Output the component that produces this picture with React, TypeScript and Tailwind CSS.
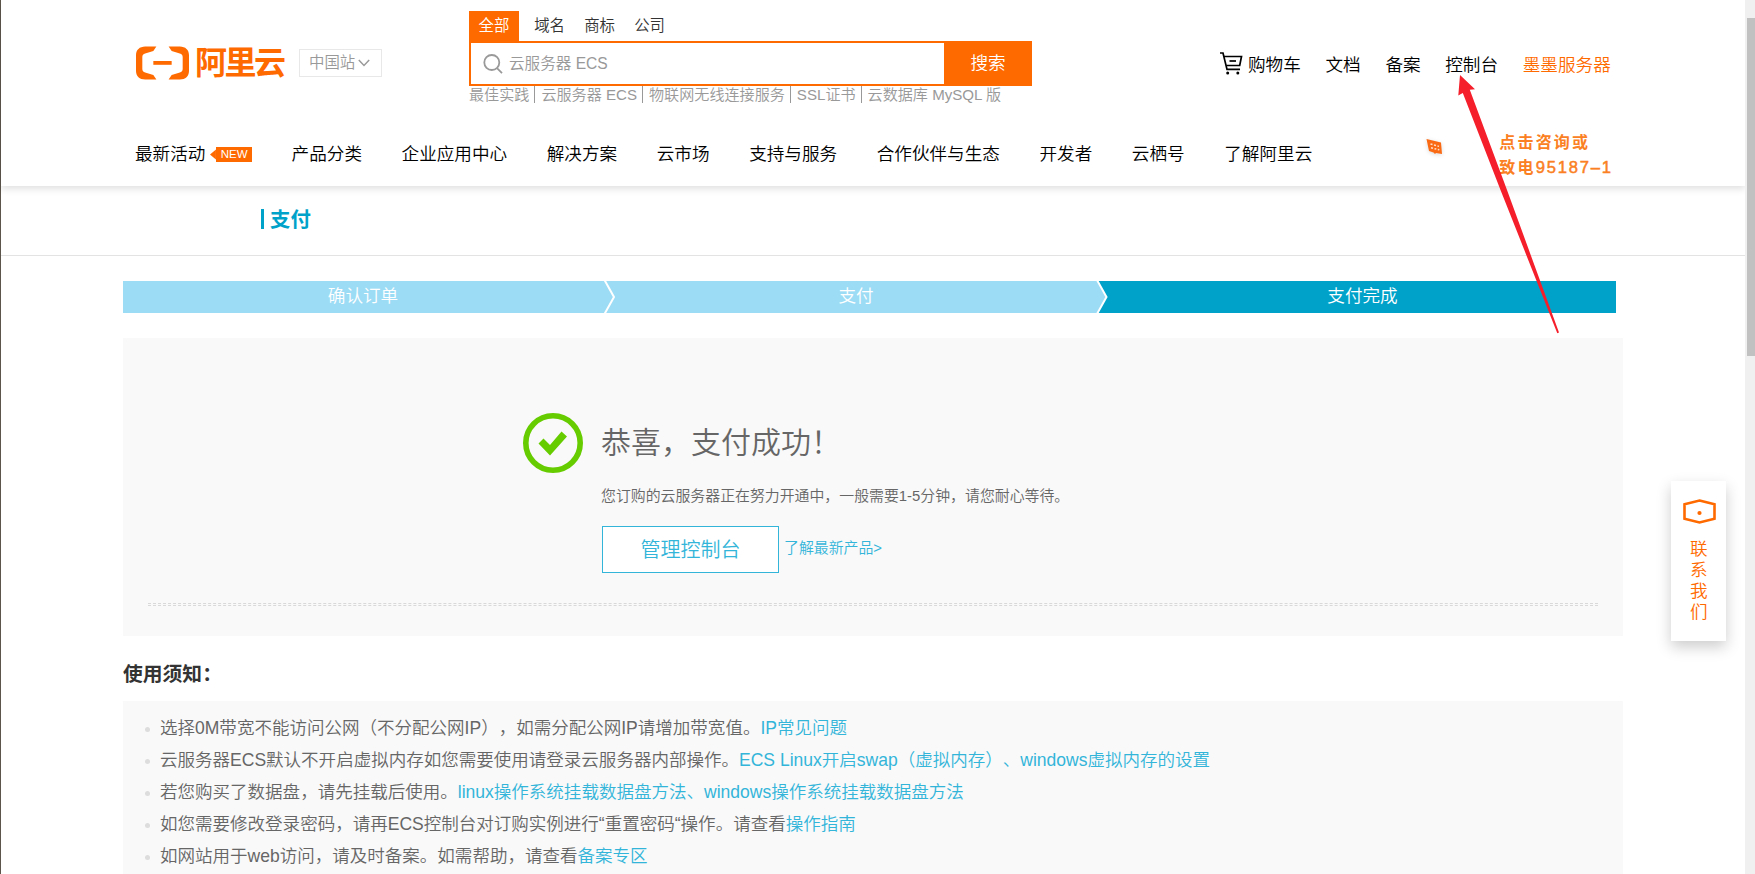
import { clsx } from "clsx";

interface Notice {
  text: string;
  links: string[];
}

const searchTabs = ["全部", "域名", "商标", "公司"];
const hotWords = ["最佳实践", "云服务器 ECS", "物联网无线连接服务", "SSL证书", "云数据库 MySQL 版"];
const navItems = [
  "产品分类",
  "企业应用中心",
  "解决方案",
  "云市场",
  "支持与服务",
  "合作伙伴与生态",
  "开发者",
  "云栖号",
  "了解阿里云",
];

const notices: Notice[] = [
  { text: "选择0M带宽不能访问公网（不分配公网IP），如需分配公网IP请增加带宽值。", links: ["IP常见问题"] },
  {
    text: "云服务器ECS默认不开启虚拟内存如您需要使用请登录云服务器内部操作。",
    links: ["ECS Linux开启swap（虚拟内存）", "windows虚拟内存的设置"],
  },
  {
    text: "若您购买了数据盘，请先挂载后使用。",
    links: ["linux操作系统挂载数据盘方法", "windows操作系统挂载数据盘方法"],
  },
  { text: "如您需要修改登录密码，请再ECS控制台对订购实例进行“重置密码“操作。请查看", links: ["操作指南"] },
  { text: "如网站用于web访问，请及时备案。如需帮助，请查看", links: ["备案专区"] },
];

function Logo() {
  return (
    <div className="flex items-center text-[#ff6a00]">
      <svg className="w-[53px] h-[34px]" viewBox="0 0 52 34" preserveAspectRatio="none" fill="currentColor">
        <path d="M20 0.5H9C3.5 0.5 0 4 0 9v16c0 5 3.5 8.5 9 8.5h11l-3-4.6-8-2.4C7.2 26 6.2 24.8 6.2 23V11c0-1.8 1-3 2.8-3.5l8-2.4z" />
        <path d="M32 0.5h11c5.5 0 9 3.5 9 8.5v16c0 5-3.5 8.5-9 8.5H32l3-4.6 8-2.4c1.8-.5 2.8-1.7 2.8-3.5V11c0-1.8-1-3-2.8-3.5l-8-2.4z" />
        <path d="M17 15h18v3.8H17z" />
      </svg>
      <span className="ml-[6px] text-[32px] leading-[34px] font-bold tracking-[-2.5px]">阿里云</span>
    </div>
  );
}

function SearchBox() {
  return (
    <div className="w-[563px] text-[15.4px]">
      <div className="flex h-[30px] leading-[29px] text-[#333]">
        {searchTabs.map((tab, i) => (
          <span key={tab} className={clsx("w-[50px] pl-[9.6px]", i === 0 && "mr-[5.6px] bg-[#ff6a00] text-white")}>
            {tab}
          </span>
        ))}
      </div>
      <div className="flex h-[45px] border-2 border-[#ff6a00]">
        <div className="flex flex-1 items-center pl-3 text-[#999]">
          <svg className="h-5 w-5" viewBox="0 0 20 20" fill="none" stroke="currentColor" strokeWidth="1.8">
            <circle cx="8.8" cy="8.5" r="7.5" />
            <path d="M14 14.2l5 5" />
          </svg>
          <span className="ml-[6px] text-[15.6px] leading-none">云服务器 ECS</span>
        </div>
        <button className="-my-0.5 -mr-0.5 w-[88px] bg-[#ff6a00] text-[17.6px] text-white">搜索</button>
      </div>
      <div className="flex h-[17px] text-[15.1px] leading-[17px] whitespace-nowrap text-[#999]">
        {hotWords.map((word, i) => (
          <span key={word} className={clsx("pr-[5px]", i > 0 && "border-l border-[#999] pl-[6px]")}>
            {word}
          </span>
        ))}
      </div>
    </div>
  );
}

function UserLinks() {
  return (
    <div className="flex items-center gap-[24.7px] text-[17.6px] leading-[24px] whitespace-nowrap text-black">
      <span className="flex items-center">
        <svg className="-mt-[3px] mr-[5px] ml-px h-[23px] w-[23px]" viewBox="0 0 23 23" fill="none" stroke="currentColor" strokeWidth="1.7">
          <path d="M0 1h3l4 16.4h13" />
          <path d="M4 4.5h17.500l-1.800 9H6.300" />
          <path d="M9.5 9h6.5" />
          <circle cx="7.7" cy="21" r="1.5" fill="currentColor" stroke="none" />
          <circle cx="17.8" cy="21" r="1.5" fill="currentColor" stroke="none" />
        </svg>
        购物车
      </span>
      <span>文档</span>
      <span>备案</span>
      <span>控制台</span>
      <span className="text-[#ff6a00]">墨墨服务器</span>
    </div>
  );
}

function Header() {
  return (
    <header className="h-[186px] bg-white shadow-[0_3px_7px_rgba(0,0,0,0.12)]">
      <div className="flex h-[120px] pl-[135px]">
        <div className="mt-[46px] w-[163px]">
          <Logo />
        </div>
        <div className="mt-[49px] flex h-7 w-[83px] items-center border border-[#e8e8e8] pl-[9px] text-[15.4px] text-[#999]">
          中国站
          <svg className="ml-[3px] h-2 w-3" viewBox="0 0 12 8" fill="none" stroke="currentColor" strokeWidth="1.5">
            <path d="M0.8 1l5.2 5.4L11.2 1" />
          </svg>
        </div>
        <div className="mt-[11px] ml-[87px]">
          <SearchBox />
        </div>
        <div className="mt-[53px] ml-[187px]">
          <UserLinks />
        </div>
      </div>
      <div className="flex h-[66px] pl-[135px] text-[17.6px] text-black">
        <nav className="flex h-[68px] items-center gap-[39.6px] whitespace-nowrap">
          <span className="flex w-[116px] items-center">
            <span className="-ml-px">最新活动</span>
            <svg className="mt-px ml-[5px] h-[15px] w-[6px] text-[#ff6a00]" viewBox="0 0 6 15" fill="currentColor">
              <path d="M6 2.5v10L0 7.5z" />
            </svg>
            <span className="mt-px h-[15px] w-9 bg-[#ff6a00] text-center text-[11.5px] leading-[15px] text-white">NEW</span>
          </span>
          {navItems.map((item) => (
            <span key={item}>{item}</span>
          ))}
        </nav>
        <svg className="mt-[18px] ml-[114px] h-[18px] w-[18px] drop-shadow-sm" viewBox="0 0 18 18">
          <path d="M0.5 1l14.500 3.500 1 11.500-6-1-1 1-1.500-1.500-4.500-1.500z" fill="#fa6a14" />
          <path d="M4.5 6l2 .5M8 7l2 .5M11.5 8l1.500.4M5 9.800l2 .5M8.500 10.700l1.800.4M11.800 11.500l1.500.3" stroke="#ffe0cc" strokeWidth="1.5" />
        </svg>
        <div className="mt-[10px] ml-[55px] text-[16px] leading-[25px] font-bold tracking-[2.2px] whitespace-nowrap text-[#fa8023]">
          <div>点击咨询或</div>
          <div className="flex h-[25px]">
            致电
            <span className="text-[16.6px] font-normal tracking-[1.8px] [-webkit-text-stroke:0.5px_#fa8023]">95187–1</span>
          </div>
        </div>
      </div>
    </header>
  );
}

function Steps() {
  return (
    <div className="mt-[25px] ml-[122px] flex h-8 w-[1493px] text-center text-[17.6px] leading-[31px] text-white">
      <div className="w-[480px] bg-[#9cdcf5]">确认订单</div>
      <svg className="h-8 w-[13px] bg-[#9cdcf5]" viewBox="0 0 13 32" fill="none">
        <path d="M1.5 -1l9.500 17-9.500 17" stroke="#fff" strokeWidth="2" />
      </svg>
      <div className="w-[480px] bg-[#9cdcf5]">支付</div>
      <svg className="h-8 w-[13px] bg-[#00a2ca]" viewBox="0 0 13 32" fill="none">
        <path d="M-3 -1H1l9.500 17-9.500 17H-3z" fill="#9cdcf5" stroke="#fff" strokeWidth="2" />
      </svg>
      <div className="flex-1 bg-[#00a2ca]">支付完成</div>
    </div>
  );
}

function Result() {
  return (
    <section className="mt-[25px] ml-[122px] h-[298px] w-[1500px] bg-[#f9f9f9] px-[25px] pt-[75px] text-[#666]">
      <div className="flex h-[191px] border-b border-dashed border-[#d9d9d9] pl-[374.5px]">
        <svg className="h-[60px] w-[60px]" viewBox="0 0 60 60">
          <circle cx="30" cy="30" r="27.2" fill="none" stroke="#66cc00" strokeWidth="5.6" />
          <path d="M15.5 30.5l5-5 6.5 6.5L38.5 18.5l5.5 5L27 42.5z" fill="#66cc00" />
        </svg>
        <div className="ml-[19.5px]">
          <h1 className="-ml-px h-[60px] text-[30px] leading-[60px]">恭喜，支付成功！</h1>
          <p className="mt-[13px] -ml-px h-5 text-[14.9px] leading-5">
            您订购的云服务器正在努力开通中，一般需要1-5分钟，请您耐心等待。
          </p>
          <div className="mt-5 flex text-[#33b5d9]">
            <button className="h-[47px] w-[177px] border border-[#33b5d9] bg-white text-[20px]">管理控制台</button>
            <a className="ml-[5px] text-[14.9px] leading-[45px]">了解最新产品&gt;</a>
          </div>
        </div>
      </div>
      <div className="mt-px border-t border-dashed border-[#d9d9d9]" />
    </section>
  );
}

function Notices() {
  return (
    <section className="ml-[122px] w-[1500px]">
      <h2 className="h-[65px] pt-[23px] text-[19.8px] leading-[30px] font-bold text-[#333]">使用须知：</h2>
      <ul className="h-[200px] bg-[#f9f9f9] pt-[11px] pl-[22px] text-[17.53px] whitespace-nowrap text-[#666]">
        {notices.map((notice) => (
          <li key={notice.text} className="flex h-8 items-center leading-8">
            <span className="mt-[3px] mr-[10px] h-[5px] w-[5px] rounded-full bg-[#ddd]" />
            <span>
              {notice.text}
              <a className="text-[#33b5d9]">{notice.links.join("、")}</a>
            </span>
          </li>
        ))}
      </ul>
    </section>
  );
}

function ContactUs() {
  return (
    <aside className="absolute top-[481px] left-[1671px] flex h-[160px] w-[55px] flex-col items-center bg-white pt-[18px] text-[#ff6a00] shadow-[0_6px_14px_rgba(0,0,0,0.2)]">
      <svg className="ml-px h-[25px] w-[33px]" viewBox="0 0 33 25" fill="none" stroke="currentColor" strokeWidth="2.6">
        <path d="M16.5 1.5l15 3.8v14.4l-15 3.8-15-3.800V5.3z" />
        <circle cx="16.5" cy="14" r="2.1" fill="currentColor" stroke="none" />
      </svg>
      <span className="mt-[15px] ml-px w-[18px] text-[17.6px] leading-[20.9px]">联系我们</span>
    </aside>
  );
}

export default function App() {
  return (
    <div className="relative flex h-[874px] w-[1755px] overflow-hidden bg-white font-['Liberation_Sans','Noto_Sans_CJK_SC',sans-serif] font-[350] [text-spacing-trim:space-all]">
      <div className="h-[874px] w-[1745px] border-l border-[#5c554c]">
        <Header />
        <div className="flex h-[70px] items-center border-b border-[#e3e3e3] pl-[260px] pb-[3px]">
          <span className="h-5 w-[3px] bg-[#00a2ca]" />
          <span className="mt-px ml-[6px] text-[20.4px] leading-5 font-bold text-[#00a2ca]">支付</span>
        </div>
        <Steps />
        <Result />
        <Notices />
      </div>
      <div className="h-[874px] w-[10px] bg-[#f0f0f0] pt-[18px] pl-0.5">
        <div className="h-[338px] bg-[#c1c1c1]" />
      </div>

      <ContactUs />

      <svg className="pointer-events-none absolute top-[74px] left-[1456px] h-[262px] w-[106px]" viewBox="1456 74 106 262">
        <path d="M1460 75l15 14.3-5.2 0.5L1507 190 1559 332.5l-1.7.8L1500.5 190 1462.8 93l-4.500 2.600z" fill="#f51f2b" />
      </svg>
    </div>
  );
}
